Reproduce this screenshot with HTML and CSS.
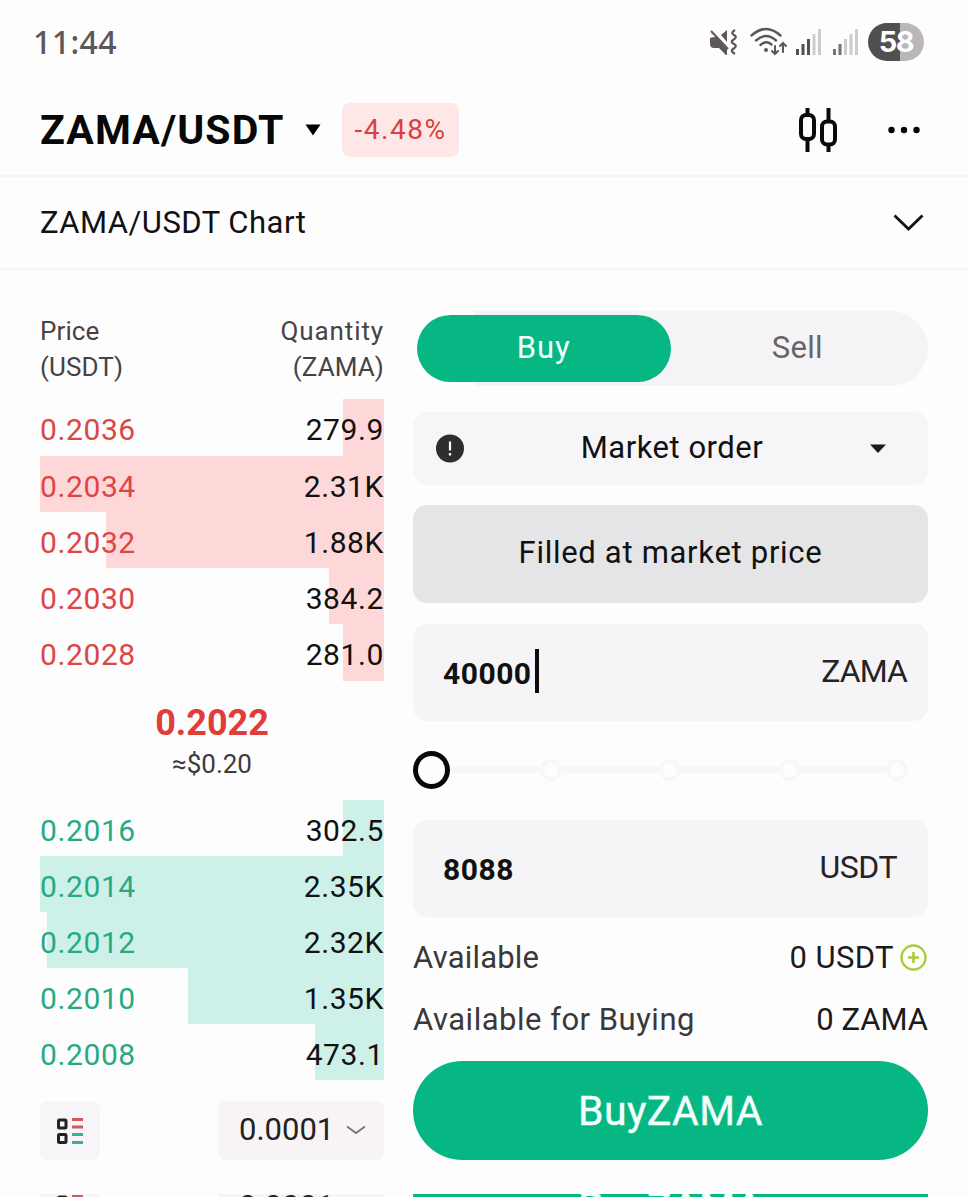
FILE: index.html
```html
<!DOCTYPE html>
<html lang="en">
<head>
  <meta charset="UTF-8">
  <title>ZAMA/USDT</title>
  <link rel="stylesheet" href="styles.css">
</head>
<body>
  <div class="status-bar">
    <span class="time">11:44</span>
    <div class="status-icons">
      <svg class="mute" width="28" height="28" viewBox="0 0 28 28">
        <path d="M1 10q3-1 6-1l11 12v6h-1l-7-7H5q-4 0-4-4z M12 7l6-5v12z" fill="#5c5655"/>
        <path d="M2 3l17 18" stroke="#5c5655" stroke-width="2"/>
        <path d="M26 2q-5 3-1 5t-1 5q-3 2 1 4t-1 5q-3 2 2 5" fill="none" stroke="#5c5655" stroke-width="2.200"/>
      </svg>
      <svg class="wifi" width="38" height="30" viewBox="0 0 38 30">
        <g fill="none" stroke="#5c5655" stroke-width="2.400" stroke-linecap="round">
          <path d="M1.500 8.500Q16 -4.500 30.500 8.500"/>
          <path d="M6 13.500Q16 4.500 26 13.500"/>
          <path d="M10.500 18Q16 13 21.500 17.500"/>
          <path d="M25 19v8m-3-3 3 3 3-3M33 25v-9m-3 3 3-3 3 3" stroke-width="2"/>
        </g>
        <circle cx="16" cy="23" r="2" fill="#5c5655"/>
      </svg>
      <svg class="signal" width="26" height="28" viewBox="0 0 26 28">
        <path d="M0 21h3v6H0zM5.500 16h3v11h-3zM11 11h3v16h-3z" fill="#55504f"/>
        <path d="M16.500 6h3v21h-3zM22 1h3v26h-3z" fill="#cfcbcb"/>
      </svg>
      <svg class="signal" width="26" height="28" viewBox="0 0 26 28">
        <path d="M0 21h3v6H0zM5.500 16h3v11h-3z" fill="#77706f"/>
        <path d="M11 11h3v16h-3zM16.500 6h3v21h-3zM22 1h3v26h-3z" fill="#cfcbcb"/>
      </svg>
      <span class="battery">58</span>
    </div>
  </div>

  <header class="header">
    <h1 class="pair">ZAMA/USDT</h1>
    <svg class="pair-arrow" width="16" height="12" viewBox="0 0 16 12"><path d="M.5.500h15L8 11.500z"/></svg>
    <span class="change">-4.48%</span>
    <div class="header-icons">
      <svg width="40" height="48" viewBox="0 0 40 48" fill="none" stroke="#0a0a0a" stroke-width="4">
        <rect x="3" y="9" width="13" height="24" rx="5"/>
        <path d="M9.500 2v7M9.500 33v13M30.500 2v13M30.500 39v7"/>
        <rect x="24" y="15.500" width="13" height="23" rx="5"/>
      </svg>
      <svg width="32" height="8" viewBox="0 0 32 8"><circle cx="3.500" cy="4" r="3.200"/><circle cx="16" cy="4" r="3.200"/><circle cx="28.500" cy="4" r="3.200"/></svg>
    </div>
  </header>

  <div class="chart-row">
    <span>ZAMA/USDT Chart</span>
    <svg width="32" height="20" viewBox="0 0 32 20"><path d="M2.500 3.500l14 13.500 14-13.500" fill="none" stroke="#111" stroke-width="2.800"/></svg>
  </div>

  <main class="trade">
    <section class="book">
      <div class="book-head">
        <div>Price<br>(USDT)</div>
        <div class="right"><span class="wide">Quantity</span><br>(ZAMA)</div>
      </div>

      <div class="levels asks">
        <div class="level" style="--bar: 41px"><span class="price">0.2036</span><span>279.9</span></div>
        <div class="level" style="--bar: 344px"><span class="price">0.2034</span><span>2.31K</span></div>
        <div class="level" style="--bar: 278px"><span class="price">0.2032</span><span>1.88K</span></div>
        <div class="level" style="--bar: 55px"><span class="price">0.2030</span><span>384.2</span></div>
        <div class="level" style="--bar: 41px"><span class="price">0.2028</span><span>281.0</span></div>
      </div>

      <div class="last">
        <strong>0.2022</strong>
        <span>≈$0.20</span>
      </div>

      <div class="levels bids">
        <div class="level" style="--bar: 41px"><span class="price">0.2016</span><span>302.5</span></div>
        <div class="level" style="--bar: 344px"><span class="price">0.2014</span><span>2.35K</span></div>
        <div class="level" style="--bar: 337px"><span class="price">0.2012</span><span>2.32K</span></div>
        <div class="level" style="--bar: 196px"><span class="price">0.2010</span><span>1.35K</span></div>
        <div class="level" style="--bar: 69px"><span class="price">0.2008</span><span>473.1</span></div>
      </div>

      <div class="book-tools">
        <div class="tool depth">
          <svg width="26" height="28" viewBox="0 0 26 28" fill="none" stroke-width="3">
            <rect x="1.500" y="3" width="7.500" height="8" rx="1" stroke="#222"/>
            <rect x="1.500" y="17.500" width="7.500" height="8" rx="1" stroke="#222"/>
            <path d="M15 2.500h11M15 10h11" stroke="#d3595c"/>
            <path d="M15 17.500h11M15 25.500h11" stroke="#38b295"/>
          </svg>
        </div>
        <div class="tool step">
          <span>0.0001</span>
          <svg width="20" height="10" viewBox="0 0 20 10"><path d="M1 1.500l9 6.500 9-6.500" fill="none" stroke="#777" stroke-width="2"/></svg>
        </div>
      </div>

      <div class="book-tools next">
        <div class="tool depth">
          <svg width="26" height="28" viewBox="0 0 26 28" fill="none" stroke-width="3">
            <rect x="1.500" y="3" width="7.500" height="8" rx="1" stroke="#222"/>
            <path d="M15 2.500h11" stroke="#d3595c"/>
          </svg>
        </div>
        <div class="tool step"><span>0.0001</span></div>
      </div>
    </section>

    <section class="order">
      <div class="tabs">
        <div class="tab active">Buy</div>
        <div class="tab">Sell</div>
      </div>

      <div class="order-type">
        <svg width="30" height="30" viewBox="0 0 30 30">
          <circle cx="15" cy="14.500" r="14" fill="#2e2d2f"/>
          <path d="M15 7.500v9M15 19v2.500" stroke="#fff" stroke-width="2.200"/>
        </svg>
        <span>Market order</span>
        <svg width="16" height="9" viewBox="0 0 16 9"><path d="M0 .500h16L8 9z" fill="#1c1a1a"/></svg>
      </div>

      <div class="market-price">Filled at market price</div>

      <div class="field">
        <span class="value">40000<i class="caret"></i></span>
        <span class="unit">ZAMA</span>
      </div>

      <div class="slider">
        <span class="thumb"></span>
        <span class="line first-line"></span><span class="dot"></span>
        <span class="line"></span><span class="dot"></span>
        <span class="line"></span><span class="dot"></span>
        <span class="line last-line"></span><span class="dot"></span>
      </div>

      <div class="field">
        <span class="value">8088</span>
        <span class="unit usdt">USDT</span>
      </div>

      <div class="info available">
        <span>Available</span>
        <span class="amount">0 USDT
          <svg width="28" height="28" viewBox="0 0 28 28" fill="none" stroke="#a6cc3a">
            <circle cx="13.500" cy="14.500" r="12" stroke-width="2.400"/>
            <path d="M13.500 9v11M8 14.500h11" stroke-width="2.600"/>
          </svg>
        </span>
      </div>
      <div class="info">
        <span>Available for Buying</span>
        <span class="amount">0 ZAMA</span>
      </div>

      <button class="submit">BuyZAMA</button>
      <div class="submit-next"><span>BuyZAMA</span></div>
    </section>
  </main>
</body>
</html>
```
FILE: styles.css
```css
* {
  box-sizing: border-box;
}

body {
  margin: 0;
  height: 1197px;
  overflow: hidden;
  background: #fefdfe;
  color: #111;
  font-family: Roboto, "Noto Sans", sans-serif;
}

svg {
  display: block;
  flex-shrink: 0;
}

/* status bar */
.status-bar {
  height: 83px;
  padding: 0 44px 0 33px;
  display: flex;
  align-items: center;
  justify-content: space-between;
}

.time {
  font: 500 32px "Noto Sans", sans-serif;
  letter-spacing: 0.4px;
  color: #5a5858;
}

.status-icons {
  display: flex;
  align-items: center;
}

.wifi {
  margin-left: 13px;
}

.signal {
  margin-left: 8px;
}

.signal + .signal {
  margin-left: 11px;
}

.battery {
  width: 56px;
  height: 38px;
  margin-left: 9px;
  border-radius: 19px;
  background: linear-gradient(to right, #514f4f 58%, #b9b7b7 58%);
  color: #fff;
  font: 700 29px/38px Inter, sans-serif;
  letter-spacing: -1.5px;
  text-align: center;
}

/* pair header */
.header {
  height: 94px;
  padding: 2px 48px 0 40px;
  display: flex;
  align-items: center;
  border-bottom: 2px solid #f7f5f8;
}

.pair {
  margin: 0;
  width: 243px;
  color: #080808;
  font-size: 41px;
  font-weight: 700;
  letter-spacing: 1.1px;
  white-space: nowrap;
}

.pair-arrow {
  margin-left: 22px;
}

.change {
  width: 117px;
  height: 54px;
  margin-left: 21px;
  border-radius: 8px;
  background: #ffe7e8;
  color: #d8403f;
  font-size: 28px;
  line-height: 53px;
  letter-spacing: 1.5px;
  text-align: center;
}

.header-icons {
  margin-left: auto;
  display: flex;
  align-items: center;
  gap: 50px;
}

.chart-row {
  height: 93px;
  padding: 0 44px 1px 40px;
  display: flex;
  align-items: center;
  justify-content: space-between;
  border-bottom: 2px solid #f7f5f8;
  font-size: 31px;
  letter-spacing: 0.5px;
}

/* main area */
.trade {
  padding: 0 40px;
  display: grid;
  grid-template-columns: 344px 515px;
  gap: 29px;
}

.book {
  padding-top: 43px;
}

.book-head {
  height: 86px;
  display: flex;
  justify-content: space-between;
  color: #454345;
  font-size: 26px;
  line-height: 36px;
  letter-spacing: 0.1px;
}

.right {
  text-align: right;
}

.wide {
  letter-spacing: 0.9px;
}

.level {
  height: 56px;
  padding-top: 4px;
  display: flex;
  align-items: center;
  justify-content: space-between;
  background: linear-gradient(var(--fill), var(--fill)) right / var(--bar) 100% no-repeat;
  font-size: 30px;
  letter-spacing: 0.6px;
}

.asks .level:first-child,
.asks .level:last-child {
  height: 57px;
}

.asks {
  --fill: #fed8d8;
}

.asks .price {
  color: #dc4645;
}

.bids {
  --fill: #cdf1e8;
}

.bids .price {
  color: #27aa82;
}

.last {
  height: 119px;
  padding-top: 22px;
  display: flex;
  flex-direction: column;
  align-items: center;
}

.last strong {
  color: #e13b3a;
  font-size: 36px;
  line-height: 41px;
}

.last span {
  color: #3d3b3d;
  font-size: 26px;
  line-height: 40px;
}

.book-tools {
  margin-top: 21px;
  display: flex;
  justify-content: space-between;
}

.tool {
  height: 59px;
  border-radius: 8px;
  background: #f7f5f7;
  display: flex;
  align-items: center;
}

.depth {
  width: 60px;
  justify-content: center;
}

.step {
  width: 166px;
  padding: 0 0 2px 21px;
  gap: 12px;
  background: #f8f4f6;
  color: #242122;
  font-size: 31px;
}

/* top edge of the following row */
.next {
  height: 3px;
  margin-top: 34px;
  overflow: hidden;
}

.next .tool {
  margin-top: -16px;
}

/* order form */
.order {
  padding-top: 41px;
}

.tabs {
  height: 75px;
  padding: 4px 4px 4px 3px;
  margin-left: 1px;
  border-radius: 38px;
  background: linear-gradient(to right, transparent 60px, #f4f4f6 60px);
  display: flex;
}

.tab {
  flex: 1;
  color: #686466;
  font-size: 31px;
  line-height: 65px;
  letter-spacing: 0.3px;
  text-align: center;
}

.active {
  height: 67px;
  border-radius: 34px;
  background: #06b783;
  color: #f3fffb;
  letter-spacing: 1px;
}

.order-type {
  height: 73px;
  margin-top: 26px;
  padding: 0 42px 0 22px;
  border-radius: 14px;
  background: #f6f5f7;
  display: flex;
  align-items: center;
  justify-content: space-between;
  font-size: 31px;
  letter-spacing: 0.5px;
}

.order-type span {
  padding: 0 0 3px 9px;
}

.market-price {
  height: 98px;
  margin-top: 20px;
  border-radius: 14px;
  background: #e5e4e6;
  font-size: 31px;
  line-height: 96px;
  letter-spacing: 0.7px;
  text-align: center;
}

.field {
  height: 97px;
  margin-top: 21px;
  padding: 0 21px 0 30px;
  border-radius: 14px;
  background: #f5f4f6;
  display: flex;
  align-items: center;
  justify-content: space-between;
}

.value {
  padding-top: 1px;
  display: flex;
  align-items: center;
  font-size: 30px;
  font-weight: 700;
  letter-spacing: 0.5px;
}

.caret {
  width: 4px;
  height: 44px;
  margin: -4px 0 0 3px;
  background: #0c0c0c;
}

.unit {
  padding-bottom: 3px;
  color: #252325;
  font-size: 32px;
  letter-spacing: -0.9px;
}

.usdt {
  padding-right: 10px;
  letter-spacing: -0.5px;
}

.slider {
  height: 99px;
  padding: 0 20px 2px 0;
  display: flex;
  align-items: center;
}

.thumb {
  width: 37px;
  height: 38px;
  border: 5px solid #080808;
  border-radius: 50%;
}

.line {
  width: 98px;
  height: 7px;
  background: #f7f7f9;
}

.first-line {
  width: 90px;
}

.last-line {
  width: 85px;
}

.dot {
  width: 22px;
  height: 22px;
  border: 4px solid #f7f7f9;
  border-radius: 50%;
}

.slider + .field {
  margin-top: 0;
}

.info {
  height: 62px;
  display: flex;
  align-items: center;
  justify-content: space-between;
  color: #3a383a;
  font-size: 31px;
  letter-spacing: 0.5px;
}

.available {
  margin-top: 9px;
}

.available > span:first-child {
  letter-spacing: 0.2px;
}

.amount {
  display: flex;
  align-items: center;
  gap: 6px;
  color: #1c1a1c;
  letter-spacing: 0;
}

.available .amount {
  letter-spacing: 0.4px;
}

.submit {
  display: block;
  width: 515px;
  height: 99px;
  margin-top: 11px;
  padding: 0;
  border: 0;
  border-radius: 50px;
  background: #06b783;
  color: #f3fffb;
  font: 400 41px Roboto, sans-serif;
  letter-spacing: 0.4px;
  -webkit-text-stroke: 0.4px #f3fffb;
}

.submit-next {
  height: 3px;
  margin-top: 34px;
  overflow: hidden;
  background: #06b783;
  color: #f3fffb;
  font-size: 41px;
  font-weight: 500;
  line-height: 48px;
  text-align: center;
}

.submit-next span {
  display: block;
  margin-top: -11px;
}
```
